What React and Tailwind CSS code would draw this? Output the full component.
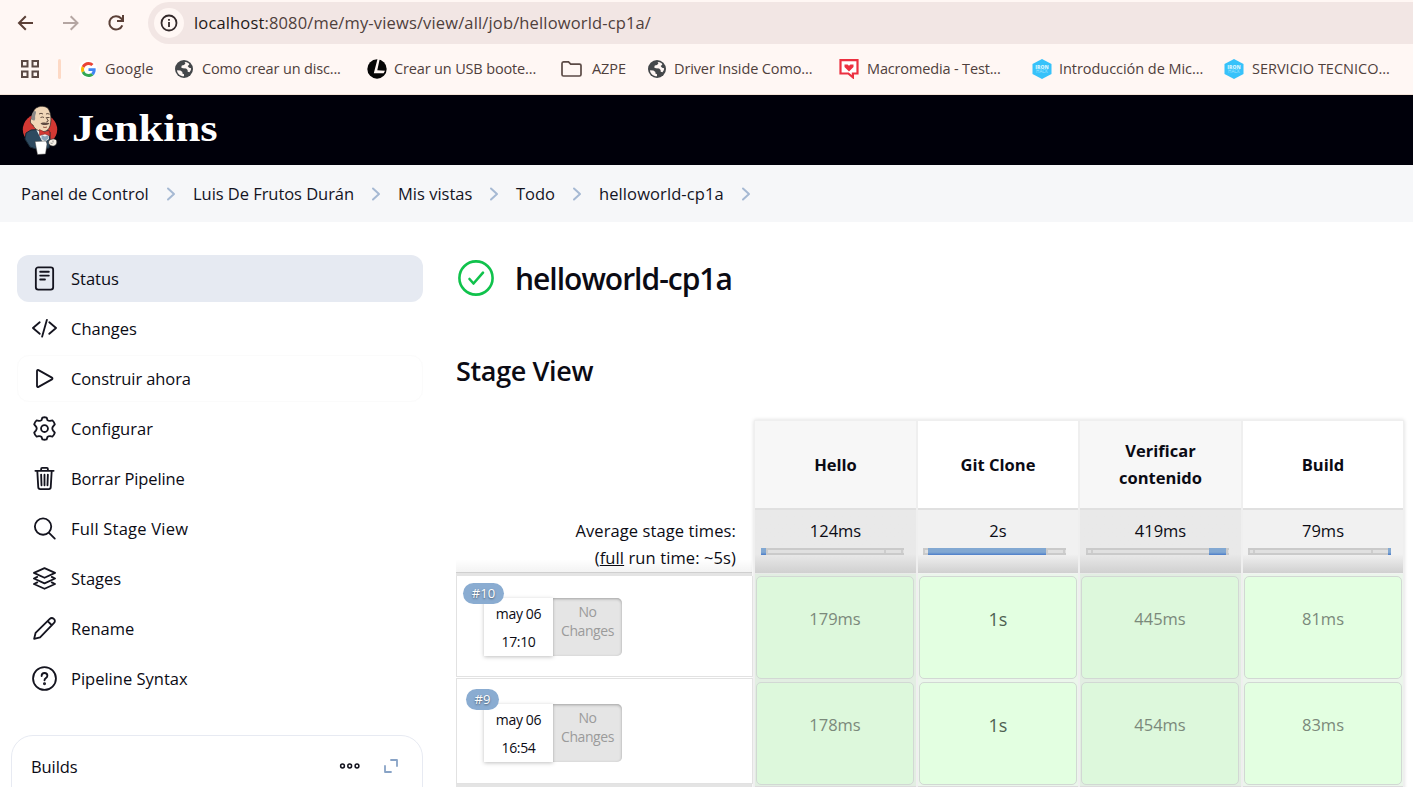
import React from "react";

const Globe = () => (
  <svg width="18" height="18" viewBox="0 0 18 18">
    <circle cx="9" cy="9" r="9" fill="#44474a" />
    <path
      d="M2 10.200l3.400.2 2 1.600v1.400l1.600.8v2C5 16.200 2.100 13.500 2 10.200zM9.600 2l.8 1.600-1.400 1.300-2.200.7-.6 1.800 1.700.9 3.200.3 1.500 1.500.1 1.700 1.800.4c1-1.100 1.500-2.200 1.600-3.900l-2-.5-1.500-1.700 1.700-1.400-.4-1.300C12.500 2.500 11.100 2 9.600 2z"
      fill="#fff7f4"
    />
  </svg>
);

const Google = () => (
  <span className="flex h-[18px] w-[18px] items-center justify-center rounded-full bg-white">
    <svg width="15" height="15" viewBox="0 0 48 48">
      <path fill="#EA4335" d="M24 9.500c3.540 0 6.710 1.220 9.210 3.600l6.850-6.850C35.900 2.380 30.470 0 24 0 14.620 0 6.510 5.380 2.560 13.220l7.980 6.190C12.430 13.720 17.740 9.500 24 9.500z" />
      <path fill="#4285F4" d="M46.980 24.550c0-1.570-.15-3.090-.38-4.550H24v9.020h12.940c-.58 2.960-2.260 5.480-4.780 7.180l7.730 6c4.510-4.180 7.090-10.360 7.090-17.650z" />
      <path fill="#FBBC05" d="M10.530 28.590c-.48-1.450-.76-2.990-.76-4.590s.27-3.140.76-4.590l-7.980-6.190C.92 16.460 0 20.120 0 24c0 3.880.92 7.540 2.560 10.780l7.970-6.190z" />
      <path fill="#34A853" d="M24 48c6.480 0 11.930-2.130 15.890-5.810l-7.730-6c-2.150 1.450-4.920 2.300-8.160 2.300-6.260 0-11.570-4.220-13.470-9.910l-7.980 6.190C6.510 42.620 14.620 48 24 48z" />
    </svg>
  </span>
);

const Ell = () => (
  <svg width="20" height="20" viewBox="0 0 20 20">
    <circle cx="10" cy="10" r="9.700" fill="#060606" />
    <path d="M10.500 0h2.200L10.300 11.300l7.700.5-1.400 2.400H6.800z" fill="#fff7f4" />
  </svg>
);

const Folder = () => (
  <svg width="21" height="16" viewBox="0 0 21 16" fill="none" stroke="#5b4a45" strokeWidth="1.700">
    <path d="M2.500.9h5l2.200 2.200h8.800a1.500 1.500 0 0 1 1.500 1.500v8.900a1.500 1.500 0 0 1-1.500 1.500h-16A1.500 1.500 0 0 1 1 13.500v-11A1.600 1.600 0 0 1 2.500.9z" />
  </svg>
);

const RedHeart = () => (
  <svg width="20" height="20" viewBox="0 0 20 20">
    <path d="M1.500 1.200h17v13.300h-4.600v3.800l-4.600-3.800H1.500z" fill="#fff" stroke="#ec3040" strokeWidth="2.200" />
    <path d="M10 12.500L5.500 8V5.500h3L10 6.800l1.500-1.300h3V8z" fill="#ec3040" />
  </svg>
);

const Hex = () => (
  <svg width="20" height="20" viewBox="0 0 20 20">
    <path d="M10 0l9.500 5v10L10 20 .5 15V5z" fill="#37c2fa" />
    <text x="10" y="9.800" textAnchor="middle" fontSize="5" fontWeight="800" fill="#d8f4ff" fontFamily="Open Sans, sans-serif">IRON</text>
    <text x="10" y="14" textAnchor="middle" fontSize="4.500" fill="#a5e4ff" fontFamily="Open Sans, sans-serif">HACK</text>
  </svg>
);

const BOOKMARKS = [
  { icon: <Google />, label: "Google", box: "w-[96px] gap-[8px]", track: "tracking-[0.15px]" },
  { icon: <Globe />, label: "Como crear un disc...", box: "w-[192px] gap-[9px]", track: "tracking-[-0.15px]" },
  { icon: <Ell />, label: "Crear un USB boote...", box: "w-[194px] gap-[7px]", track: "tracking-[-0.15px]" },
  { icon: <Folder />, label: "AZPE", box: "w-[87px] gap-[10px]", track: "tracking-[-0.1px]" },
  { icon: <Globe />, label: "Driver Inside Como...", box: "w-[191px] gap-[8px]", track: "tracking-[-0.12px]" },
  { icon: <RedHeart />, label: "Macromedia - Test...", box: "w-[193px] gap-[8px]", track: "tracking-[-0.15px]" },
  { icon: <Hex />, label: "Introducción de Mic...", box: "w-[192px] gap-[7px]", track: "tracking-[-0.05px]" },
  { icon: <Hex />, label: "SERVICIO TECNICO...", box: "gap-[8px]", track: "tracking-[0px]" },
];

function Browser() {
  return (
    <div className="h-[95px] border-b border-[#f3e3d8] bg-[#fff7f4] text-[#4f403c]">
      <div className="flex h-[46px] items-center pl-[17px]">
        <svg width="18" height="18" viewBox="0 0 18 18" fill="none" stroke="#5b4037" strokeWidth="2">
          <path d="M16 9H2.500M8.800 2.200L2 9l6.800 6.800" />
        </svg>
        <svg className="ml-[27px]" width="18" height="18" viewBox="0 0 18 18" fill="none" stroke="#b5a6a2" strokeWidth="2">
          <path d="M1 9h14M8.700 2.200L15.500 9l-6.800 6.800" />
        </svg>
        <svg className="ml-[27px]" width="18" height="18" viewBox="0 0 18 18" fill="none" stroke="#5b4037" strokeWidth="2">
          <path d="M15.300 11.300A6.700 6.700 0 1 1 14 4.300l1.500 1.500" />
          <path d="M16 1v6h-6" />
        </svg>
        <div className="ml-[23px] flex h-[42px] flex-1 items-center rounded-l-full bg-[#f2e6e4] pl-[6px]">
          <span className="flex h-[30px] w-[30px] items-center justify-center rounded-full bg-[#fff7f4]">
            <svg width="18" height="18" viewBox="0 0 18 18" fill="none" stroke="#33292a" strokeWidth="1.800">
              <circle cx="9" cy="9" r="7.500" />
              <path d="M9 8v5M9 5v1.800" />
            </svg>
          </span>
          <span className="mt-px ml-[10px] text-[16.5px] tracking-[0.15px]">
            <span className="text-[#241a18]">localhost</span>:8080/me/my-views/view/all/job/helloworld-cp1a/
          </span>
        </div>
      </div>
      <div className="flex h-[46px] items-center pl-[21px] text-[14.5px]">
        <svg width="18" height="18" viewBox="0 0 18 18" fill="none" stroke="#5b4a45" strokeWidth="2">
          <path d="M1 1h5.500v5.500H1zM11.500 1H17v5.500h-5.500zM1 11.500h5.500V17H1zM11.500 11.500H17V17h-5.500z" />
        </svg>
        <span className="mr-[18px] ml-[19px] h-[20px] w-[3px] rounded-full bg-[#fdd9c5]" />
        {BOOKMARKS.map((b, i) => (
          <span key={i} className={`flex shrink-0 items-center whitespace-nowrap ${b.box}`}>
            <span className="shrink-0">{b.icon}</span>
            <span className={b.track}>{b.label}</span>
          </span>
        ))}
      </div>
    </div>
  );
}

const Butler = () => (
  <svg width="36" height="50" viewBox="0 0 36 50">
    <ellipse cx="18" cy="24.500" rx="17.200" ry="16" fill="#d33833" />
    <path d="M9 25l-5 3-1 6 5 8 6 2 13-1 1-8 0-8-4-3z" fill="#2e4a60" stroke="#182936" strokeWidth="1" />
    <path d="M14 24l6 3 6-1 1 8-6 4z" fill="#f3f1ee" />
    <path d="M12 5.500C14 1 23-.5 26.500 4 29 8 29.500 14 28.500 19c-1 5-3.500 7.500-7 7.500-5 0-9-2.500-10.500-6.500-3-1-3.500-5-1-7 0-2.500.5-5 2-7.500z" fill="#f0d6b7" stroke="#2b2522" strokeWidth=".7" />
    <path d="M11.500 6.500c2.500-1.500 3 .5 2 3s.5 4-1 6c-2 0-4-1-3-4 .2-2 1-3.800 2-5z" fill="#8b8987" />
    <path d="M17 9q2-1.500 4 0M24 9q2-1 3.500.3M18.500 12.500q2-1 3.500 0M25 12.500h2.500M24 12l2.300 4-2 1" fill="none" stroke="#3b2a22" strokeWidth=".8" />
    <path d="M18.500 18.500c2-1.500 4-.8 5.500-.8s2.500-.4 3.500 1c-2.500 1.700-7 2-9-.2z" fill="#5f4a41" />
    <path d="M21 22q2 1 4 0" fill="none" stroke="#8b4a38" strokeWidth=".9" />
    <path d="M17.500 24.500l5 2.500 5-1.500.5 5.500-5-2-5.500 1.500z" fill="#d33833" stroke="#7c1f1c" strokeWidth=".5" />
    <path d="M19.500 30l3.500 1.500 3-1.500.5 3.500-3.500 2.500-3.500-2z" fill="#8ba3b8" />
    <path d="M13 36.500l11-.5 1 3-1.500 10-8 .5z" fill="#fff" stroke="#444" strokeWidth=".5" />
    <path d="M26.500 37c.5-3.500 7-4 8-1.500 1 3-1 6-4 5.500-2 0-4-1.500-4-4z" fill="#f5efe6" stroke="#333" strokeWidth=".7" />
    <path d="M28.500 38l2 .5M31 35.500v2" stroke="#666" strokeWidth=".7" />
  </svg>
);

const CRUMBS = [
  { label: "Panel de Control", box: "w-[172px]" },
  { label: "Luis De Frutos Durán", box: "w-[205px] tracking-[-0.05px]" },
  { label: "Mis vistas", box: "w-[118px]" },
  { label: "Todo", box: "w-[83px]" },
  { label: "helloworld-cp1a", box: "w-[169px] tracking-[0.1px]" },
];

function Breadcrumbs() {
  return (
    <div className="flex h-[57px] items-center bg-[#f6f7f9] pl-[21px] text-[16.5px] text-[#14141f]">
      {CRUMBS.map((c) => (
        <span key={c.label} className={`flex items-center justify-between pr-[17px] whitespace-nowrap ${c.box}`}>
          <span className="pt-[2px]">{c.label}</span>
          <svg width="10" height="14" viewBox="0 0 10 14" fill="none" stroke="#a6b9d3" strokeWidth="2" strokeLinecap="round" strokeLinejoin="round">
            <path d="M2 1.500L8 7l-6 5.500" />
          </svg>
        </span>
      ))}
    </div>
  );
}

const ITEMS = [
  {
    label: "Status",
    row: "bg-[#e6eaf2]",
    art: (
      <>
        <rect x="4" y="1.500" width="18" height="23" rx="2.500" />
        <path d="M8.500 6h9M8.500 10h9M8.500 14h5" />
      </>
    ),
  },
  { label: "Changes", art: <path d="M8 6.500l-7 6 7 6M18 6.500l7 6-7 6M15.500 4l-5 17.500" /> },
  { label: "Construir ahora", row: "border border-[#fbfbfb]", track: "tracking-[-0.1px]", art: <path d="M5.200 5.300v15.400c0 1 .8 1.400 1.600 1l13.900-7.800c.8-.5.8-1.300 0-1.800L6.800 4.300c-.8-.5-1.600 0-1.600 1z" /> },
  {
    label: "Configurar",
    art: (
      <>
        <circle cx="13" cy="13" r="3.600" />
        <path d="M10.800 1.600Q13 1 15.200 1.600l.9 2.700q1 .9 2.700.8l2.400-.5q1.800 1.600 2.500 4.100L22 10.800q-.9 1.200-.9 2.200t.9 2.200l1.700 2.100q-.7 2.500-2.500 4.100l-2.400-.5q-1.700-.1-2.700.8l-.9 2.700q-2.200.6-4.400 0l-.9-2.700q-1-.9-2.700-.8l-2.400.5q-1.800-1.600-2.500-4.100L4 15.200q.9-1.200.9-2.200T4 10.800L2.300 8.700Q3 6.200 4.800 4.600l2.400.5q1.700.1 2.700-.8z" />
      </>
    ),
  },
  {
    label: "Borrar Pipeline",
    track: "tracking-[-0.12px]",
    art: <path d="M3.500 5h19M9.500 5V3q0-1 1-1h5q1 0 1 1v2M5.500 5l1 17q.1 2 2 2h9q1.900 0 2-2l1-17M9.500 9l.4 11M13 9v11M16.500 9l-.4 11" />,
  },
  { label: "Full Stage View", track: "tracking-[0.22px]", art: <path d="M11.500 2.500a8.500 8.500 0 1 1 0 17 8.500 8.500 0 0 1 0-17zM17.700 17.500l6 6" /> },
  {
    label: "Stages",
    art: <path d="M13 2.200l11 5-11 5-11-5zM5.500 11.300l-3.500 1.700 11 5 11-5-3.500-1.700M5.500 17l-3.500 1.700 11 5 11-5-3.500-1.700" />,
  },
  {
    label: "Rename",
    art: <path d="M2.200 23.800l1.500-6.200L18.500 3q2-2 4.200 0t0 4.300L8.400 22.300zM16.300 5.300l4.300 4.300" />,
  },
  {
    label: "Pipeline Syntax",
    art: (
      <>
        <circle cx="13" cy="13" r="11.900" />
        <path d="M10 10.500q0-3.200 3-3.200t3 2.900q0 1.500-1.600 2.400T13 15" />
        <circle cx="13" cy="18.500" r=".6" fill="#14141f" />
      </>
    ),
  },
];

function Sidebar() {
  return (
    <aside className="w-[423px] shrink-0 pt-[33px]">
      <nav className="flex flex-col gap-[3px] pl-[17px]">
        {ITEMS.map((it) => (
          <div key={it.label} className={`flex h-[47px] items-center rounded-xl ${it.row || "border border-transparent"} ${it.label === "Status" ? "pl-[15px]" : "pl-[14px]"}`}>
            <svg width="25" height="25" viewBox="0 0 26 26" fill="none" stroke="#14141f" strokeWidth="1.900" strokeLinecap="round" strokeLinejoin="round">
              {it.art}
            </svg>
            <span className={`ml-[14px] pt-[2px] text-[16.5px] ${it.track || ""}`}>{it.label}</span>
          </div>
        ))}
      </nav>
      <section className="mt-[33px] ml-[11px] h-[52px] overflow-hidden">
        <div className="flex h-[90px] items-start rounded-[22px] border border-[#e7eaf2] pt-[18px] pl-[19px]">
          <span className="flex-1 text-[16.5px] leading-[25px] tracking-[-0.1px]">Builds</span>
          <svg className="mt-[9px]" width="22" height="6" viewBox="0 0 22 6" fill="none" stroke="#14141f" strokeWidth="1.500">
            <circle cx="3.500" cy="3" r="1.900" />
            <circle cx="10.700" cy="3" r="1.900" />
            <circle cx="18" cy="3" r="1.900" />
          </svg>
          <svg className="mt-[5px] mr-[24px] ml-[23px]" width="14" height="14" viewBox="0 0 14 14" fill="none" stroke="#88a3c6" strokeWidth="1.800" strokeLinecap="round" strokeLinejoin="round">
            <path d="M7 1h6v6M1 7v6h6" />
          </svg>
        </div>
      </section>
    </aside>
  );
}

const SEGMENTS = ["w-[5px]", "w-[118px]", "w-[17px]", "w-[3px]"];

const STAGES = [
  { name: "Hello", avg: "124ms", runs: ["179ms", "178ms"], on: 0, dark: true, w: "w-[163px]", pad: "pl-[6px]" },
  { name: "Git Clone", avg: "2s", runs: ["1s", "1s"], on: 1, dark: false, w: "w-[162px]", pad: "pl-[5px]" },
  { name: "Verificar contenido", avg: "419ms", runs: ["445ms", "454ms"], on: 2, dark: true, w: "w-[163px]", pad: "pl-[6px]" },
  { name: "Build", avg: "79ms", runs: ["81ms", "83ms"], on: 3, dark: false, w: "w-[162px]", pad: "pl-[5px]" },
];

function Stage({ s }) {
  return (
    <div className={`flex shrink-0 flex-col border-x border-t border-[#efefef] ${s.w} ${s.dark ? "bg-[#e9ebe9]" : "bg-[#f1f3f1]"}`}>
      <div className={`flex h-[87px] items-center justify-center px-8 pb-px text-center text-[16.5px] leading-[27px] font-bold ${s.dark ? "bg-[#f7f7f7]" : "bg-white"}`}>
        {s.name}
      </div>
      <div className={`h-[65px] border-t-2 border-[#e0e0e0] bg-linear-to-b from-70% to-[#d0d0d0] ${s.dark ? "from-[#e9e9e9]" : "from-[#f1f1f1]"}`}>
        <div className="pt-[7px] text-center text-[16.5px] leading-[27px]">{s.avg}</div>
        <div className={`flex pt-[4px] ${s.pad}`}>
          {SEGMENTS.map((w, i) => (
            <span
              key={i}
              className={`h-[7px] ${w} ${i === s.on ? "bg-linear-to-b from-[#82a8d2] from-60% to-[#4b7cc9]" : "border-y-2 border-[#cacaca] bg-[#e0e0e0] shadow-[inset_2px_0_#cdcdcd]"}`}
            />
          ))}
        </div>
      </div>
      <div className="mt-px flex flex-col">
        {s.runs.map((r, i) => (
          <div key={i} className={`h-[106px] pt-[2px] pl-px ${s.dark ? "bg-[#e2eee2] pr-[2px]" : "bg-[#ebf6eb] pr-px"}`}>
            <div
              className={`h-[103px] rounded-[5px] border border-[#d2d8d4] text-center leading-[27px] ${s.dark ? "bg-[#ddf8dc]" : "bg-[#e3ffe1]"} ${
                s.on === 1 ? "pt-[29px] text-[18px] text-[#4f5f52]" : "pt-[28px] text-[16.5px] text-[#7b897b]"
              }`}
            >
              {r}
            </div>
          </div>
        ))}
        <div className="h-[10px] bg-[#dcdcdc]" />
      </div>
    </div>
  );
}

const RUNS = [
  { id: "#10", time: "17:10", badge: "left-[6px] w-[41px]" },
  { id: "#9", time: "16:54", badge: "left-[9px] w-[33px]" },
];

function StageTable() {
  return (
    <div className="flex">
      <div className="w-[298px] shrink-0 pt-[89px]">
        <div className="mr-[2px] h-[63px] bg-linear-to-b from-white from-80% to-[#f3f3f3] pt-[8px] pr-[16px] text-right text-[16.5px] leading-[27px] tracking-[0.1px]">
          Average stage times:
          <br />(<u>full</u> run time: ~5s)
        </div>
        <div className="mr-[2px] h-[4px] border-t border-[#cfcfcf] bg-[#e4e4e4]" />
        {RUNS.map((r, i) => (
          <div key={r.id} className={`relative mr-px flex border border-[#e2e2e2] bg-white pl-[27px] ${i === 0 ? "mb-px h-[101px] border-t-0 pt-[22px]" : "h-[106px] pt-[25px]"}`}>
            <div className="h-[58px] w-[69px] bg-white pt-[2px] text-center text-[14px] leading-[28px] tracking-[-0.35px] shadow-[0_1px_4px_rgba(0,0,0,0.25)]">
              may 06
              <br />
              {r.time}
            </div>
            <div className="h-[58px] w-[69px] rounded-r-[5px] bg-[#e5e5e5] pt-[4px] text-center text-[14px] leading-[19px] tracking-[-0.42px] text-[#9b9b9b] shadow-[inset_0_1px_3px_rgba(0,0,0,0.3)]">
              No
              <br />
              Changes
            </div>
            <span
              className={`absolute flex h-[21px] items-center justify-center rounded-full bg-[#8aacd1] text-[13px] text-white [text-shadow:0_1px_2px_rgba(0,0,0,0.5)] ${i === 0 ? "top-[7px]" : "top-[10px]"} ${r.badge}`}
            >
              {r.id}
            </span>
          </div>
        ))}
        <div className="mr-[2px] h-[8px] bg-[#e4e4e4]" />
      </div>
      <div className="flex shadow-[0_0_4px_rgba(0,0,0,0.15)]">
        {STAGES.map((s) => (
          <Stage key={s.name} s={s} />
        ))}
      </div>
    </div>
  );
}

export default function App() {
  return (
    <div className="flex h-[787px] w-[1413px] flex-col overflow-hidden bg-white font-['Open_Sans','Noto_Sans',sans-serif] text-[#0b0b14]">
      <Browser />
      <header className="flex h-[70px] shrink-0 items-center bg-[#00000a] pl-[22px]">
        <Butler />
        <span className="mb-[3px] ml-[14px] inline-block origin-left scale-x-[1.2] font-['Liberation_Serif',serif] text-[37px] leading-none font-bold text-white">Jenkins</span>
      </header>
      <Breadcrumbs />
      <div className="flex min-h-0 flex-1">
        <Sidebar />
        <main className="min-w-0 flex-1 pt-[38px] pl-[33px]">
          <div className="flex h-[36px] items-center pl-[2px]">
            <svg width="36" height="36" viewBox="0 0 36 36" fill="none" stroke="#10c24c" strokeWidth="2.600" strokeLinecap="round" strokeLinejoin="round">
              <circle cx="18" cy="18" r="16.600" />
              <path d="M11.500 19l4 4.500L25 12.700" />
            </svg>
            <h1 className="mt-[2px] ml-[21px] text-[30px] leading-none font-semibold tracking-[-1px]">helloworld-cp1a</h1>
          </div>
          <h2 className="mt-[55px] mb-[29px] text-[27px] leading-[40px] font-semibold tracking-[-0.35px]">Stage View</h2>
          <StageTable />
        </main>
      </div>
    </div>
  );
}
